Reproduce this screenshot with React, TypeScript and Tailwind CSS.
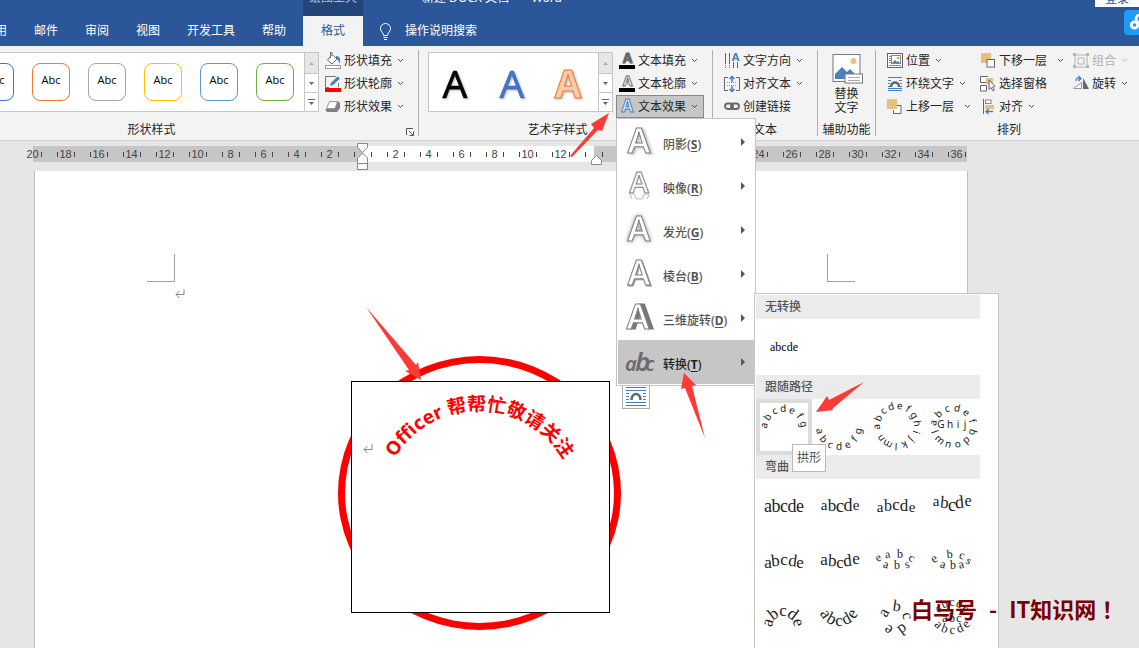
import type { ReactNode } from 'react';
import { clsx } from 'clsx';

const TABS = ['引用', '邮件', '审阅', '视图', '开发工具', '帮助'];
const SHAPE_PRESETS = [
  'border-[#4472c4]',
  'border-[#ed7d31]',
  'border-[#a5a5a5]',
  'border-[#ffc000]',
  'border-[#5b9bd5]',
  'border-[#70ad47]',
];
const RULER = Array.from({ length: 29 }, (_, i) => (i - 10) * 2);

type Glyph = [char: string, x: number, y: number, size: number, rotate?: number];

function Chevron({ className }: { className?: string }) {
  return (
    <svg viewBox="0 0 7 5" className={clsx('h-[5px] w-[7px] shrink-0', className)} aria-hidden="true">
      <path d="M1 1l2.5 2.5L6 1" fill="none" stroke="currentColor" strokeWidth="1" opacity="0.8" />
    </svg>
  );
}

function Icon({ children }: { children: ReactNode }) {
  return (
    <svg viewBox="0 0 16 16" className="size-4 shrink-0 overflow-visible" aria-hidden="true">
      {children}
    </svg>
  );
}

function LetterIcon({ fill, stroke, bar }: { fill: string; stroke: string; bar?: boolean }) {
  return (
    <Icon>
      <text x="8.5" y={bar ? 10 : 13} textAnchor="middle" fontSize={bar ? 14 : 17} fontWeight="700" fill={fill} stroke={stroke} strokeWidth="0.9">
        A
      </text>
      {bar && <rect y="12" width="16" height="4" fill="#000" />}
    </Icon>
  );
}

const icons = {
  fill: (
    <Icon>
      <path d="M7 1.5L2.5 7 7 11l5-5zM7 1.5V-.5H5.5V5" fill="#fff" stroke="#666" />
      <path d="M11 3c4 0 4.500 3 4 7-2-1-1-4-4-4z" fill="#3f7fbf" />
      <rect x=".5" y="12.500" width="15" height="3" fill="#fff" stroke="#999" />
    </Icon>
  ),
  outline: (
    <Icon>
      <path d="M11 .5H.5v11H4M13.500 7v4" fill="none" stroke="#777" />
      <path d="M5 10l1-3 6.500-6.500 2.500 2L8 9z" fill="#3f7fbf" />
      <rect y="12" width="16" height="4" fill="#f00" />
    </Icon>
  ),
  effect: (
    <Icon>
      <path d="M5 2h8l2 2v5l-3 4H2L.5 11z" fill="#808080" />
      <path d="M6 2.500h6.500L10 9.500H1.500L4 3.500z" fill="#fff" stroke="#999" />
    </Icon>
  ),
  textFill: <LetterIcon fill="#666" stroke="#666" bar />,
  textOutline: <LetterIcon fill="#fff" stroke="#666" bar />,
  textEffect: <LetterIcon fill="#e4eef8" stroke="#3f7fbf" />,
  direction: (
    <Icon>
      <path d="M1.500 0v15M5.500 0v15M9.500 9v6M13.500 9v6" stroke="#666" strokeDasharray="11 1 1 1" />
      <text x="11.500" y="8" textAnchor="middle" fontSize="11" fontWeight="700" fill="#3f7fbf">
        A
      </text>
    </Icon>
  ),
  align: (
    <Icon>
      <path d="M4 1.500H.5v13H4M12 1.500h3.500v13H12" fill="none" stroke="#666" />
      <path d="M3 6.500h10M3 9.500h10" stroke="#999" strokeDasharray="1 1" />
      <path d="M8 0v6M5.500 3L8 .5 10.500 3M8 10v6M5.500 13L8 15.500l2.500-2.500" fill="none" stroke="#3f7fbf" strokeWidth="1.500" />
    </Icon>
  ),
  link: (
    <Icon>
      <g fill="none" stroke="#666" strokeWidth="1.800">
        <rect x="1" y="4.500" width="8" height="5.500" rx="2.700" />
        <rect x="7" y="4.500" width="8" height="5.500" rx="2.700" />
      </g>
    </Icon>
  ),
  position: (
    <Icon>
      <rect x=".5" y=".5" width="15" height="14" fill="#fff" stroke="#666" />
      <path d="M2 3.500h2M2 5.500h2M2 7.500h2M2 9.500h2M2 12.500h12" stroke="#888" />
      <rect x="4.500" y="2.500" width="9" height="8" fill="#fff" stroke="#888" />
      <path d="M5 10l3-3 2 2 1-1 2 2z" fill="#3f7fbf" />
      <circle cx="11" cy="5" r="1.300" fill="#e8a33d" />
    </Icon>
  ),
  wrap: (
    <Icon>
      <path d="M1 1.500h14M1 14.500h14M1 12.500h14" stroke="#3f7fbf" />
      <path d="M1 4.500h3M12 4.500h3M1 7.500h2M13 7.500h2M1 10.500h2M13 10.500h2" stroke="#3f7fbf" />
      <path d="M4 11c0-6 8-6 8 0" fill="none" stroke="#666" strokeWidth="2.500" />
    </Icon>
  ),
  forward: (
    <Icon>
      <path d="M7.500 6.500h6.500v8H6.500V11" fill="#fff" stroke="#666" />
      <rect x="0" y="0" width="10" height="10" fill="#e8c07d" />
    </Icon>
  ),
  backward: (
    <Icon>
      <rect x="1" y="0" width="10" height="10" fill="#e8c07d" />
      <rect x="7" y="6.500" width="7.500" height="7.500" fill="#fff" stroke="#666" />
    </Icon>
  ),
  pane: (
    <Icon>
      <path d="M8 .5H.5v6h6V5M.5 9.500h6v5.500h-6z" fill="#fff" stroke="#666" />
      <rect x="6" y="2" width="7" height="6" fill="#e8c07d" />
      <path d="M9 4v9.500l2-2 2 3.500 1.500-1-2-3 2.500-.5z" fill="#fff" stroke="#666" />
    </Icon>
  ),
  alignObjects: (
    <Icon>
      <path d="M3.500 0v15" stroke="#666" />
      <rect x="5.500" y="1" width="5.500" height="3.500" fill="#fff" stroke="#888" />
      <rect x="5" y="6" width="9" height="4" fill="#e8c07d" />
      <path d="M13 12.500H6M8.500 10L6 12.500 8.500 15" fill="none" stroke="#3f7fbf" strokeWidth="1.400" />
    </Icon>
  ),
  group: (
    <Icon>
      <path d="M2 2h12v12H2zM5 5h6v6H5z" fill="none" stroke="#b5b5b5" />
      <path d="M0 0h3v3H0zM13 0h3v3h-3zM0 12h3v3H0zM13 12h3v3h-3z" fill="#b5b5b5" />
    </Icon>
  ),
  rotate: (
    <Icon>
      <path d="M8.500 12.500h-8l8-6z" fill="#fff" stroke="#999" />
      <path d="M10 2v11h6z" fill="#666" />
      <path d="M3 5c0-3 2-3 4-2.500M5.500 0L8 2.500 5.500 5" fill="none" stroke="#3f7fbf" strokeWidth="1.300" />
    </Icon>
  ),
};

type RibbonButtonProps = {
  icon: ReactNode;
  label: string;
  menu?: boolean;
  split?: boolean;
  active?: boolean;
  disabled?: boolean;
};

function RibbonButton({ icon, label, menu, split, active, disabled }: RibbonButtonProps) {
  return (
    <button
      type="button"
      disabled={disabled}
      className={clsx(
        'flex h-[23px] items-center gap-[3px] border pr-[5px] pl-0.5 text-left whitespace-nowrap',
        active ? 'border-[#888] bg-[#c6c6c6]' : 'border-transparent',
        disabled && 'text-[#b1b1b1]',
      )}
    >
      {icon}
      {label}
      {menu && <Chevron className={split ? 'ml-[7px]' : 'ml-0.5'} />}
    </button>
  );
}

function Group({ label, launcher, className, children }: { label: string; launcher?: boolean; className: string; children: ReactNode }) {
  return (
    <>
      <section aria-label={label} className={clsx('shrink-0 pt-[3px]', className)}>
        <div className="flex h-[69px]">{children}</div>
        <div className="flex h-[22px] items-center pt-0.5">
          <span className="flex-1 text-center">{label}</span>
          {launcher && (
            <button type="button" aria-label={`${label}选项`} className="flex w-4 justify-center pt-1">
              <svg viewBox="0 0 8 8" className="size-2" aria-hidden="true">
                <path d="M7 .5H.5V7M3 3l4 4M7.500 3.500v4h-4" fill="none" stroke="#555" />
              </svg>
            </button>
          )}
        </div>
      </section>
      <div className="my-1 w-px shrink-0 bg-[#b1b1b1]" />
    </>
  );
}

function Gallery({ className, children }: { className: string; children: ReactNode }) {
  return (
    <div className={clsx('mt-[3px] flex h-15 shrink-0 border border-[#c6c6c6] bg-white', className)}>
      <div className="flex flex-1 items-center justify-end">{children}</div>
      <div className="flex w-3.5 flex-col border-l border-[#c6c6c6] text-[#666]">
        <button type="button" aria-label="上一行" className="flex h-5 items-center justify-center bg-[#e6e6e6] text-[#b1b1b1]">
          <svg viewBox="0 0 5 3" className="h-[3px] w-[5px]"><path d="M0 3L2.500 0 5 3z" fill="currentColor" /></svg>
        </button>
        <button type="button" aria-label="下一行" className="flex h-5 items-center justify-center border-y border-[#c6c6c6]">
          <svg viewBox="0 0 5 3" className="h-[3px] w-[5px]"><path d="M0 0h5L2.500 3z" fill="currentColor" /></svg>
        </button>
        <button type="button" aria-label="其他" className="flex flex-1 items-center justify-center">
          <svg viewBox="0 0 7 6" className="h-1.5 w-[7px]"><path d="M0 0h7v1H0zM1 3h5L3.500 6z" fill="currentColor" /></svg>
        </button>
      </div>
    </div>
  );
}

function EffectIcon({ kind }: { kind: string }) {
  if (kind === 'T') {
    return (
      <svg viewBox="0 0 30 30" className="size-[30px]" aria-hidden="true">
        <g fontStyle="italic" fontWeight="600" fill="#6b6b6b">
          <text y="24" x="0" fontSize="20">a</text>
          <text y="24" x="10" fontSize="26">b</text>
          <text y="24" x="20" fontSize="20">c</text>
        </g>
      </svg>
    );
  }
  const size = kind === 'R' ? 29 : 34;
  const baseline = kind === 'R' ? 22 : 26;
  return (
    <svg
      viewBox="0 0 30 30"
      className={clsx(
        'size-[30px] overflow-visible',
        kind === 'S' && 'drop-shadow-[2px_1px_1px_#bbb]',
        kind === 'G' && 'drop-shadow-[0_0_2px_#999]',
        kind === 'B' && 'drop-shadow-[1px_1px_0_#999]',
        kind === 'D' && 'drop-shadow-[4px_0_0_#777]',
      )}
      aria-hidden="true"
    >
      <text x={kind === 'D' ? 13 : 14} y={baseline} textAnchor="middle" fontSize={size} fontWeight="600" fill="#fff" stroke="#808080">
        A
      </text>
      {kind === 'R' && (
        <path d="M4.500 23h5l2 5h6l2-5h5M5 24l2 4M24 24l-2 4" fill="none" stroke="#bbb" />
      )}
    </svg>
  );
}

function EffectItem({ label, hotkey, selected }: { label: string; hotkey: string; selected?: boolean }) {
  return (
    <button
      type="button"
      role="menuitem"
      className={clsx(
        'flex h-11 w-full items-center pr-[9px] pl-[7px] font-medium',
        selected ? 'bg-[#c6c6c6] text-[#222]' : 'text-[#555]',
      )}
    >
      <EffectIcon kind={hotkey} />
      <span className="flex-1 pt-1.5 pl-2 text-left whitespace-nowrap">
        {label}(<span className="font-bold underline underline-offset-2">{hotkey}</span>)
      </span>
      <svg viewBox="0 0 4 8" className="h-2 w-1" aria-hidden="true">
        <path d="M0 0l4 4-4 4z" fill="#555" />
      </svg>
    </button>
  );
}

// letters spread over an arc, degrees measured clockwise from the top
function ring(chars: string, cx: number, cy: number, r: number, from: number, step: number, size: number): Glyph[] {
  return chars.split('').map((char, i) => {
    const deg = from + step * i;
    const rad = (deg * Math.PI) / 180;
    return [char, cx + r * Math.sin(rad), cy - r * Math.cos(rad), size, deg];
  });
}

// same, but along the bottom with the letters kept upright
function bowl(chars: string, cx: number, cy: number, r: number, from: number, step: number, size: number): Glyph[] {
  return chars.split('').map((char, i) => {
    const deg = from - step * i;
    const rad = (deg * Math.PI) / 180;
    return [char, cx - r * Math.sin(rad), cy + r * Math.cos(rad), size, deg];
  });
}

function Sample({ glyphs, name, serif, selected }: { glyphs: Glyph[]; name: string; serif?: boolean; selected?: boolean }) {
  return (
    <button type="button" aria-label={name} className={clsx('size-14', selected && 'bg-[#dcdcdc] p-1')}>
      <svg
        viewBox={selected ? '4 4 48 48' : '0 0 56 56'}
        className={clsx('block size-full bg-white', serif && "font-['Liberation_Serif',serif]")}
      >
        {glyphs.map(([char, x, y, size, rotate = 0], i) => (
          <text key={i} textAnchor="middle" fontSize={size} fill="#222" transform={`translate(${x} ${y}) rotate(${rotate})`}>
            {char}
          </text>
        ))}
      </svg>
    </button>
  );
}

const PATHS: { name: string; glyphs: Glyph[] }[] = [
  { name: '拱形', glyphs: ring('abcdefg', 28, 30, 17, -80, 26, 10) },
  { name: '下拱形', glyphs: bowl('abcdefg', 27, 28, 23, 78, 26, 10) },
  { name: '圆', glyphs: ring('abcdefghijklmn', 29, 27, 17, -92, 25, 10) },
  {
    name: '按钮',
    glyphs: [
      ...ring('abcdef', 29, 29, 17, -75, 29, 10),
      ['G', 17, 29, 10], ['h', 26, 29, 10], ['i', 34, 29, 10], ['j', 41, 29, 10],
      ...bowl('lmnopq', 29, 26, 23, 70, 28, 10),
    ],
  },
];

const WARPS: { name: string; glyphs: Glyph[] }[] = [
  { name: '正方形', glyphs: [['a', 12, 33, 18], ['b', 20, 33, 18], ['c', 28, 33, 18], ['d', 36, 33, 18], ['e', 44, 33, 18]] },
  { name: '三角', glyphs: [['a', 12, 31, 15], ['b', 20, 32, 17], ['c', 28, 33, 19], ['d', 36, 32, 18], ['e', 44, 31, 15]] },
  { name: '倒三角', glyphs: [['a', 12, 33, 15], ['b', 20, 32, 16], ['c', 28, 31, 17], ['d', 36, 32, 17], ['e', 44, 33, 15]] },
  { name: '波形', glyphs: [['a', 12, 27, 15], ['b', 20, 29, 17, 6], ['c', 28, 32, 18], ['d', 36, 29, 18, -6], ['e', 44, 27, 16]] },
  { name: '波形 1', glyphs: [['a', 12, 33, 17], ['b', 20, 31, 17, -6], ['c', 28, 30, 17], ['d', 36, 31, 17, 8], ['e', 44, 33, 17]] },
  { name: '波形 2', glyphs: [['a', 12, 30, 17], ['b', 20, 31, 17, 4], ['c', 28, 33, 17], ['d', 36, 31, 17, -6], ['e', 44, 29, 17]] },
  {
    name: '双波形 1',
    glyphs: [['e', 12, 26, 12, -30], ['a', 20, 23, 12, -10], ['b', 32, 23, 12], ['c', 42, 26, 12, 30], ['a', 17, 33, 12, 15], ['b', 29, 34, 12], ['s', 40, 33, 12, -15]],
  },
  {
    name: '双波形 2',
    glyphs: [['e', 12, 27, 13, -30], ['b', 26, 23, 12, -5], ['c', 37, 24, 12, 15], ['s', 43, 29, 12, 30], ['a', 18, 33, 12, 15], ['b', 29, 34, 12], ['a', 38, 33, 12, -15]],
  },
  { name: '拱形', glyphs: ring('abcde', 27, 36, 11, -74, 37, 17) },
  { name: '下拱形', glyphs: bowl('abcde', 27, 14, 21, 56, 28, 17) },
  { name: '圆环', glyphs: ring('abcde', 27, 28, 8, -60, 68, 16) },
  {
    name: '按钮',
    glyphs: [...ring('abcde', 28, 30, 15, -48, 24, 12), ['a', 21, 31, 12], ['b', 28, 31, 12], ['c', 35, 31, 12], ...bowl('abcde', 28, 20, 23, 45, 23, 13)],
  },
];

function BandTitle({ children }: { children: ReactNode }) {
  return <h3 className="flex h-6 items-center bg-[#ebebeb] pl-[9px] font-medium text-[#555]">{children}</h3>;
}

function TransformFlyout() {
  return (
    <div role="menu" aria-label="转换" className="absolute top-[174px] left-[137px] w-[245px] border border-[#c6c6c6] bg-white p-px pb-6">
      <div className="w-56">
        <BandTitle>无转换</BandTitle>
        <button type="button" className="flex h-14 w-14 items-center justify-center font-['Liberation_Serif',serif] text-black">
          abcde
        </button>
        <BandTitle>跟随路径</BandTitle>
        <div className="relative grid grid-cols-4">
          {PATHS.map((p, i) => (
            <Sample key={p.name} name={p.name} glyphs={p.glyphs} selected={i === 0} />
          ))}
          <div role="tooltip" className="absolute top-[45px] left-9 border border-[#b8b8b8] bg-white px-1 py-1 leading-[18px] whitespace-nowrap text-[#555]">
            拱形
          </div>
        </div>
        <BandTitle>弯曲</BandTitle>
        <div className="grid grid-cols-4">
          {WARPS.map((w, i) => (
            <Sample key={i} name={w.name} glyphs={w.glyphs} serif />
          ))}
        </div>
      </div>
    </div>
  );
}

function TextEffectsMenu() {
  return (
    <div role="menu" aria-label="文本效果" className="absolute top-full left-0 z-20 w-[140px] border border-[#c6c6c6] bg-white p-px">
      <EffectItem label="阴影" hotkey="S" />
      <EffectItem label="映像" hotkey="R" />
      <EffectItem label="发光" hotkey="G" />
      <EffectItem label="棱台" hotkey="B" />
      <EffectItem label="三维旋转" hotkey="D" />
      <EffectItem label="转换" hotkey="T" selected />
      <TransformFlyout />
    </div>
  );
}

function TitleBar() {
  return (
    <div className="-mt-4 flex h-8 bg-[#2b579a] pl-[303px] text-white">
      <div className="flex w-15 items-center justify-center bg-[#23457a] pb-1 text-[#a9bbd8]">绘图工具</div>
      <h1 className="flex items-center pb-1 pl-[59px] whitespace-pre">新建 DOCX 文档{'   -   '}Word</h1>
      <button type="button" className="ml-auto h-[23px] w-11 bg-white pt-1.5 text-[#2b579a]">登录</button>
    </div>
  );
}

function TabBar() {
  return (
    <div className="relative flex h-[30px] items-stretch bg-[#2b579a] text-white">
      <nav className="-ml-[17px] flex gap-[27px] pr-[17px]">
        {TABS.map((tab) => (
          <button key={tab} type="button">{tab}</button>
        ))}
      </nav>
      <button type="button" aria-current="page" className="w-15 bg-[#f3f3f3] text-[#2b579a]">格式</button>
      <button type="button" className="flex items-center gap-[13px] pl-4">
        <svg viewBox="0 0 13 17" className="h-[17px] w-[13px]" aria-hidden="true">
          <path d="M4.500 12.500C4.500 9.500 1.500 9 1.500 5.500a5 5 0 0 1 10 0c0 3.500-3 4-3 7zM4.500 14.500h4M5 16.500h3" fill="none" stroke="#fff" />
        </svg>
        操作说明搜索
      </button>
      <button type="button" aria-label="云盘" className="absolute -top-1.5 -right-2.5 flex size-[25px] items-center rounded-sm bg-[#1e9bff] pl-1.5">
        <svg viewBox="0 0 20 18" className="h-[18px] w-5 shrink-0" aria-hidden="true">
          <g fill="none" stroke="#fff" strokeWidth="2.800">
            <circle cx="4.500" cy="11" r="3.200" />
            <circle cx="10" cy="5" r="4" />
            <circle cx="15" cy="11" r="3.200" />
          </g>
        </svg>
      </button>
    </div>
  );
}

function Ribbon() {
  return (
    <div className="flex h-[95px] border-b border-[#d0d0d0] bg-[#f3f3f3] text-[#262626]">
      <Group label="形状样式" launcher className="-ml-[99px] w-[517px]">
        <Gallery className="w-[418px]">
          <div className="flex gap-[18px] pr-2.5">
            {SHAPE_PRESETS.map((border) => (
              <button key={border} type="button" className={clsx("size-[38px] rounded-lg border bg-white pb-1 font-['Open_Sans',sans-serif] text-[11px] text-black", border)}>
                Abc
              </button>
            ))}
          </div>
        </Gallery>
        <div className="ml-[3px]">
          <RibbonButton icon={icons.fill} label="形状填充" menu />
          <RibbonButton icon={icons.outline} label="形状轮廓" menu />
          <RibbonButton icon={icons.effect} label="形状效果" menu />
        </div>
      </Group>

      <Group label="艺术字样式" launcher className="w-[293px]">
        <Gallery className="ml-[9px] w-[185px]">
          <svg viewBox="0 0 168 58" className="h-[58px] w-[168px] drop-shadow-[1px_1px_1px_#bbb]" role="img" aria-label="艺术字样式">
            <g textAnchor="middle" fontSize="39">
              <text x="25" y="45" fill="#000" stroke="#000" strokeWidth="0.6">A</text>
              <text x="82" y="45" fill="#4472c4" stroke="#4472c4" strokeWidth="0.6">A</text>
              <text x="138" y="45" fill="#f8cbad" stroke="#ed7d31" fontWeight="700">A</text>
            </g>
          </svg>
        </Gallery>
        <div className="relative ml-[3px]">
          <RibbonButton icon={icons.textFill} label="文本填充" menu />
          <RibbonButton icon={icons.textOutline} label="文本轮廓" menu />
          <RibbonButton icon={icons.textEffect} label="文本效果" menu active />
          <TextEffectsMenu />
        </div>
      </Group>

      <Group label="文本" className="w-[104px]">
        <div className="pl-2">
          <RibbonButton icon={icons.direction} label="文字方向" menu />
          <RibbonButton icon={icons.align} label="对齐文本" menu />
          <RibbonButton icon={icons.link} label="创建链接" />
        </div>
      </Group>

      <Group label="辅助功能" className="w-[57px]">
        <button type="button" className="flex w-full flex-col items-center pt-1 leading-[14px]">
          <svg viewBox="0 0 32 32" className="mb-0.5 size-8 shrink-0" aria-hidden="true">
            <rect x="2" y="1.500" width="27" height="27" fill="#fff" stroke="#777" />
            <circle cx="22.500" cy="8" r="3" fill="#eac282" />
            <path d="M4 26v-5l7-7 5 5 3-3 4 4v6z" fill="#4a80b8" />
            <rect x="14" y="21" width="17.500" height="9" fill="#fff" stroke="#777" />
            <path d="M17 24.500h12M17 27.500h12" stroke="#aaa" />
          </svg>
          替换
          <br />
          文字
        </button>
      </Group>

      <Group label="排列" className="w-[266px]">
        <div className="grid grid-cols-[93px_93px_72px] content-start justify-items-start pl-2">
          <RibbonButton icon={icons.position} label="位置" menu />
          <RibbonButton icon={icons.backward} label="下移一层" menu split />
          <RibbonButton icon={icons.group} label="组合" menu disabled />
          <RibbonButton icon={icons.wrap} label="环绕文字" menu />
          <RibbonButton icon={icons.pane} label="选择窗格" />
          <RibbonButton icon={icons.rotate} label="旋转" menu />
          <RibbonButton icon={icons.forward} label="上移一层" menu split />
          <RibbonButton icon={icons.alignObjects} label="对齐" menu />
        </div>
      </Group>
    </div>
  );
}

function Ruler() {
  return (
    <div className="relative h-[30px] shrink-0 pt-[5px] pl-4 font-['Liberation_Sans',sans-serif] text-[11px] text-[#444]">
      <div className="flex h-4 w-[957px] bg-[linear-gradient(to_right,transparent_17px,#c6c6c6_17px,#c6c6c6_347px,#fff_347px,#fff_578px,#c6c6c6_578px,#c6c6c6_951px,transparent_951px)]">
        {RULER.map((n) => (
          <div key={n} className="flex w-[33px] shrink-0 items-center justify-center">
            <span className={clsx('h-[5px] w-px', n !== -20 && 'bg-[#444]')} />
            <span className="w-4 text-center">{n === 0 || n === 14 ? '' : Math.abs(n)}</span>
            <span className="h-[5px] w-px bg-[#444]" />
          </div>
        ))}
      </div>
      <svg viewBox="0 0 12 28" className="absolute top-0.5 left-[357px] h-7 w-3" aria-hidden="true">
        <path d="M.5.5h10v4l-5 5-5-5zM5.500 10l5 5v5.500H.5V15zM.5 20.500h10v6H.5z" fill="#fff" stroke="#888" />
      </svg>
      <svg viewBox="0 0 12 12" className="absolute top-3.5 left-[591px] size-3" aria-hidden="true">
        <path d="M5.500.5l5 5v4H.5v-4z" fill="#fff" stroke="#888" />
      </svg>
    </div>
  );
}

function ReturnMark({ className }: { className: string }) {
  return (
    <svg viewBox="0 0 10 10" className={clsx('absolute size-2.5', className)} aria-hidden="true">
      <path d="M9 0v5.500H1M4.500 2L1 5.500 4.500 9" fill="none" stroke="#888" />
    </svg>
  );
}

function Page() {
  return (
    <main className="relative ml-[34px] w-[934px] flex-1 border-x border-[#c0c0c0] bg-white">
      <div className="absolute top-[83px] left-28 size-7 border-r border-b border-[#a0a0a0]" />
      <div className="absolute top-[83px] left-[792px] size-7 border-b border-l border-[#a0a0a0]" />
      <ReturnMark className="top-[118px] left-[140px]" />

      <div className="absolute top-[185px] left-[303px] h-[274px] w-[283px] rounded-[50%] border-7 border-[#f00]" />

      <div className="absolute top-[210px] left-[316px] h-[232px] w-[259px] border border-black bg-white">
        <ReturnMark className="top-[62px] left-[11px]" />
        <svg viewBox="352 382 257 230" className="size-full" role="img" aria-label="Officer 帮帮忙敬请关注">
          <path id="arch" d="M395 458A98 98 0 0 1 565 462" fill="none" />
          <text fontSize="19" fontWeight="700" fill="#f00">
            <textPath href="#arch">Officer 帮帮忙敬请关注</textPath>
          </text>
        </svg>
      </div>

      <button type="button" aria-label="布局选项" className="absolute top-[210px] left-[587px] h-7 w-7 border border-[#ababab] bg-white">
        <svg viewBox="0 0 26 26" className="size-[26px]" aria-hidden="true">
          <path d="M3 5.500h20M3 8.500h20M3 11.500h3M20 11.500h3M3 14.500h3M20 14.500h3M3 17.500h3M20 17.500h3M3 20.500h20M3 23.500h20" stroke="#3f7fbf" />
          <path d="M8.500 18c0-8 9-8 9 0" fill="none" stroke="#666" strokeWidth="2.600" />
        </svg>
      </button>
    </main>
  );
}

function Annotations() {
  return (
    <>
      <svg viewBox="0 0 1139 648" className="pointer-events-none absolute top-0 left-0 z-30 h-[648px] w-[1139px]" aria-hidden="true">
        <g fill="#fd3a35">
          <path d="M570 156l24-28-3-4 18-11-7 18-4-1-26 27z" />
          <path d="M366 307l50 58 2-3 3 18-16-9 4-1z" />
          <path d="M684 373l12 12-4 1 13 52-20-50-4 1z" />
          <path d="M816 412l11-16 2 4 35-18-32 27 2 1z" />
        </g>
      </svg>
      <p className="absolute top-[592px] left-[911px] z-30 flex gap-3 font-['Noto_Sans_CJK_TC',sans-serif] text-[22px] leading-8 font-bold whitespace-nowrap text-[#7b0000]">
        <span>白马号</span>
        <span>-</span>
        <span>IT知识网！</span>
      </p>
    </>
  );
}

export default function App() {
  return (
    <div className="relative flex h-screen flex-col overflow-hidden bg-[#e6e6e6] font-['Noto_Sans','Noto_Sans_CJK_SC',sans-serif] text-[12px] leading-4">
      <header className="shrink-0">
        <TitleBar />
        <TabBar />
        <Ribbon />
      </header>
      <Ruler />
      <Page />
      <Annotations />
    </div>
  );
}
